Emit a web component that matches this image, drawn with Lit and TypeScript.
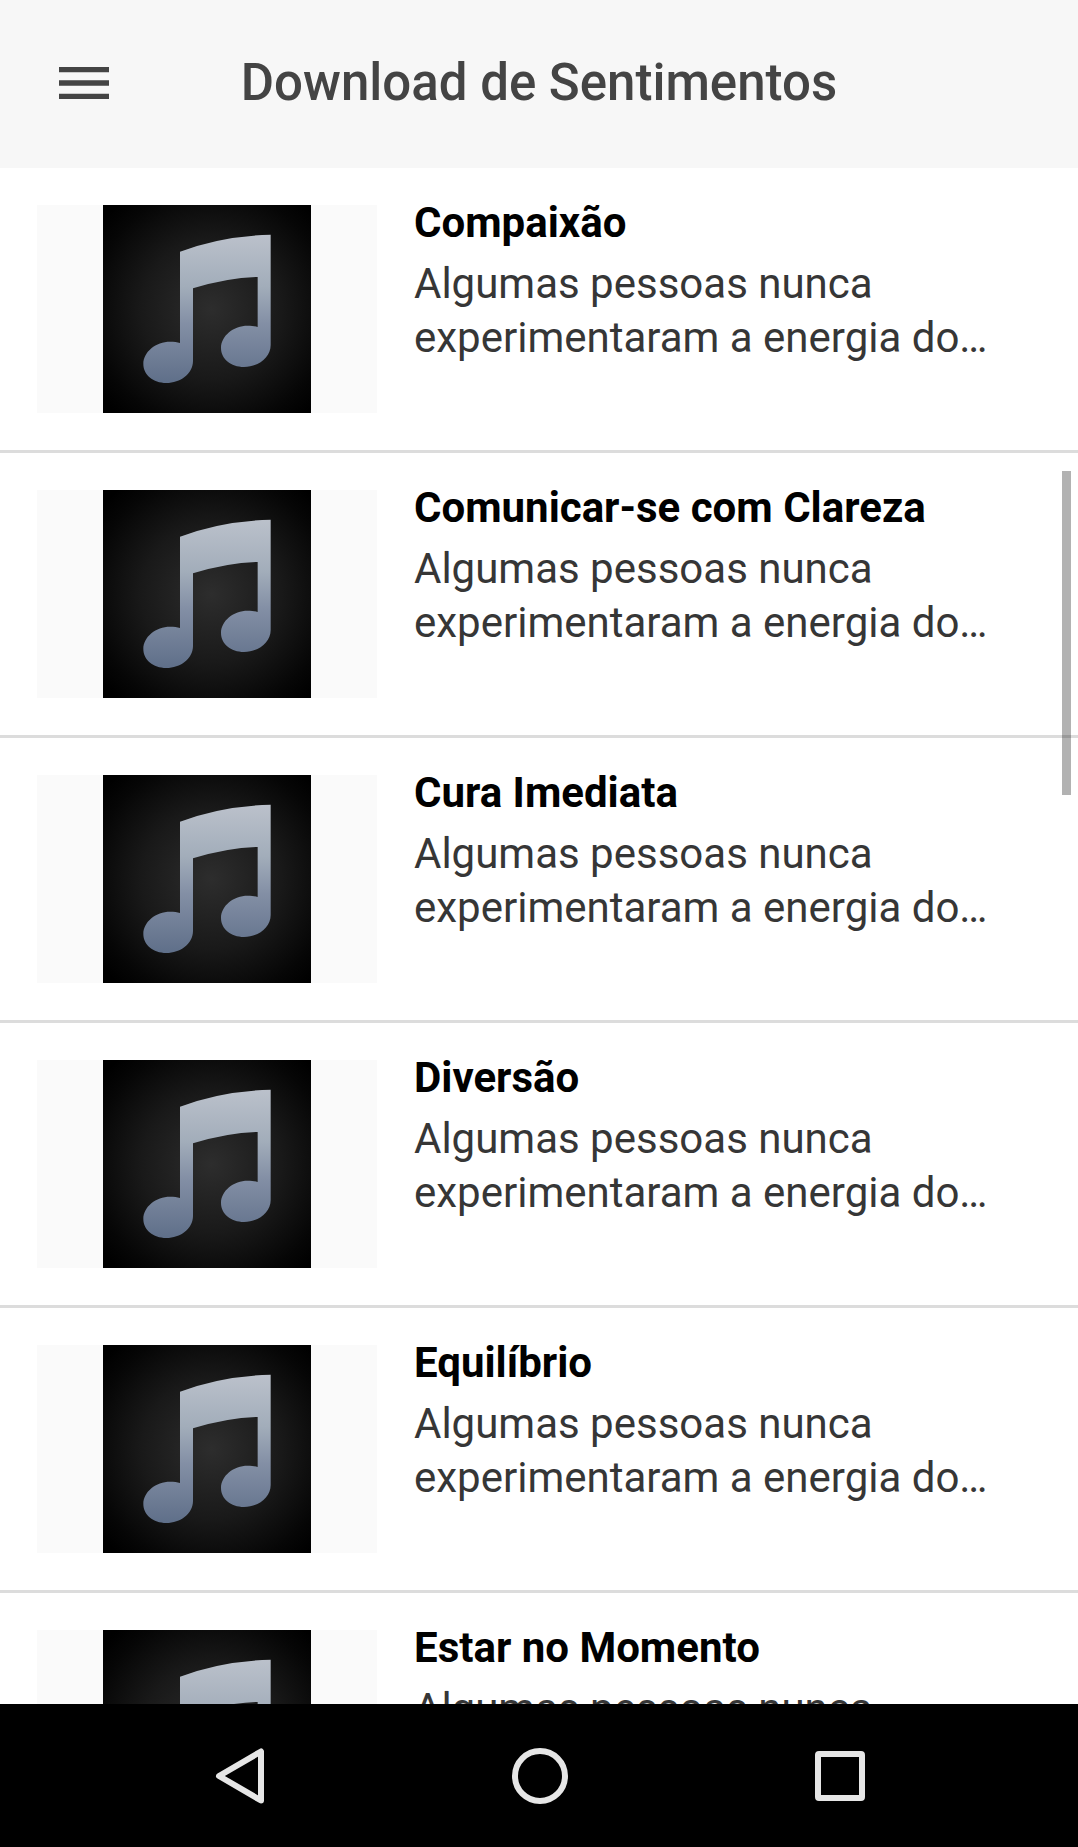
import { LitElement, html, css } from "lit";
import { customElement, property } from "lit/decorators.js";

interface Feeling {
  id: string;
  title: string;
  summary: string;
}

const SUMMARY = "Algumas pessoas nunca experimentaram a energia do…";

const FEELINGS: Feeling[] = [
  { id: "compaixao", title: "Compaixão", summary: SUMMARY },
  { id: "comunicar-se", title: "Comunicar-se com Clareza", summary: SUMMARY },
  { id: "cura-imediata", title: "Cura Imediata", summary: SUMMARY },
  { id: "diversao", title: "Diversão", summary: SUMMARY },
  { id: "equilibrio", title: "Equilíbrio", summary: SUMMARY },
  { id: "estar-no-momento", title: "Estar no Momento", summary: SUMMARY },
];

/* Default cover: a beamed note on a dark vignette. */
@customElement("music-cover")
export class MusicCover extends LitElement {
  static styles = css`
    :host {
      display: flex;
      justify-content: center;
      background: #fafafa;
    }
    .cover {
      display: block;
      height: 100%;
      aspect-ratio: 1;
    }
  `;

  render() {
    return html`
      <svg class="cover" viewBox="0 0 624 624" aria-hidden="true">
        <defs>
          <radialGradient id="vignette" gradientUnits="userSpaceOnUse" cx="325" cy="312" r="420">
            <stop offset="0" stop-color="#2d2d2d" />
            <stop offset="0.5" stop-color="#191919" />
            <stop offset="0.85" stop-color="#060606" />
            <stop offset="1" stop-color="#000" />
          </radialGradient>
          <linearGradient id="steel" gradientUnits="userSpaceOnUse" x1="0" y1="89" x2="0" y2="534">
            <stop offset="0" stop-color="#bbc1cb" />
            <stop offset="0.35" stop-color="#a2adba" />
            <stop offset="0.6" stop-color="#838fa5" />
            <stop offset="1" stop-color="#5f6f89" />
          </linearGradient>
        </defs>
        <rect width="624" height="624" fill="url(#vignette)" />
        <path
          fill="url(#steel)"
          d="M231 140Q355 93 503 89V420C503 458 465 486 423 486C383 486 354 461 354 429C354 392 392 362 434 362C446 362 456 363 464 366V216Q375 218 270 250V468C270 506 232 534 190 534C150 534 121 509 121 477C121 440 159 410 201 410C213 410 223 411 231 414Z"
        />
      </svg>
    `;
  }
}

@customElement("feeling-row")
export class FeelingRow extends LitElement {
  @property({ attribute: false }) feeling!: Feeling;

  static styles = css`
    :host {
      display: block;
    }
    .row {
      display: flex;
      align-items: flex-start;
      gap: 37px;
      padding: 37px;
      border-bottom: 3px solid #dcdcdc;
      color: inherit;
      text-decoration: none;
    }
    .thumb {
      flex: none;
      width: 340px;
      height: 208px;
    }
    .text {
      flex: 1;
      min-width: 0;
    }
    .title {
      margin: 0 0 16px;
      font-size: 42px;
      line-height: 36px;
      font-weight: 700;
      color: #000;
    }
    .summary {
      margin: 0;
      font-size: 42px;
      line-height: 54px;
      color: #363636;
    }
  `;

  render() {
    const { id, title, summary } = this.feeling;
    return html`
      <a class="row" href="#${id}">
        <music-cover class="thumb"></music-cover>
        <div class="text">
          <h2 class="title">${title}</h2>
          <p class="summary">${summary}</p>
        </div>
      </a>
    `;
  }
}

@customElement("app-root")
export class AppRoot extends LitElement {
  static styles = css`
    :host {
      display: flex;
      flex-direction: column;
      height: 100vh;
      background: #fff;
      font-family: Roboto, "Liberation Sans", sans-serif;
    }
    button {
      display: flex;
      align-items: center;
      justify-content: center;
      border: 0;
      padding: 0;
      background: none;
      cursor: pointer;
    }
    .header {
      flex: none;
      display: grid;
      grid-template-columns: 1fr auto 1fr;
      align-items: center;
      box-sizing: border-box;
      height: 168px;
      padding: 0 36px 2px;
      background: #f7f7f7;
      color: #444;
    }
    .menu {
      justify-self: start;
      width: 96px;
      height: 96px;
      color: inherit;
    }
    .menu-icon {
      width: 50px;
      height: 32px;
    }
    .heading {
      margin: 0;
      font-size: 51px;
      line-height: 60px;
      font-weight: 500;
    }
    .body {
      position: relative;
      flex: 1;
      min-height: 0;
    }
    .list {
      height: 100%;
      margin: 0;
      padding: 0;
      list-style: none;
      overflow-y: auto;
      scrollbar-width: none;
    }
    .scrollbar {
      position: absolute;
      top: 303px;
      right: 7px;
      width: 9px;
      height: 324px;
      background: rgba(0, 0, 0, 0.3);
    }
    .nav {
      flex: none;
      display: flex;
      height: 143px;
      padding: 0 89px;
      background: #000;
      color: #e6e6e6;
    }
    .nav-button {
      flex: 1;
      color: inherit;
    }
    .nav-icon {
      width: 60px;
      height: 60px;
      fill: none;
      stroke: currentColor;
      stroke-width: 6;
      stroke-linejoin: round;
    }
  `;

  render() {
    return html`
      <header class="header">
        <button class="menu" type="button" aria-label="Menu">
          <svg class="menu-icon" viewBox="0 0 50 32" fill="currentColor" aria-hidden="true">
            <path d="M0 0H50V5.3H0ZM0 13.3H50V18.7H0ZM0 26.7H50V32H0Z" />
          </svg>
        </button>
        <h1 class="heading">Download de Sentimentos</h1>
      </header>
      <main class="body">
        <ul class="list">
          ${FEELINGS.map(
            (feeling) => html`<li><feeling-row .feeling=${feeling}></feeling-row></li>`
          )}
        </ul>
        <div class="scrollbar"></div>
      </main>
      <nav class="nav">
        <button class="nav-button" type="button" aria-label="Voltar">
          <svg class="nav-icon" viewBox="0 0 60 60" aria-hidden="true">
            <path d="M52 5.500V54.500L10 30Z" />
          </svg>
        </button>
        <button class="nav-button" type="button" aria-label="Início">
          <svg class="nav-icon" viewBox="0 0 60 60" aria-hidden="true">
            <circle cx="31" cy="30" r="25" />
          </svg>
        </button>
        <button class="nav-button" type="button" aria-label="Recentes">
          <svg class="nav-icon" viewBox="0 0 60 60" aria-hidden="true">
            <rect x="9" y="8" width="44" height="44" rx="1" />
          </svg>
        </button>
      </nav>
    `;
  }
}
